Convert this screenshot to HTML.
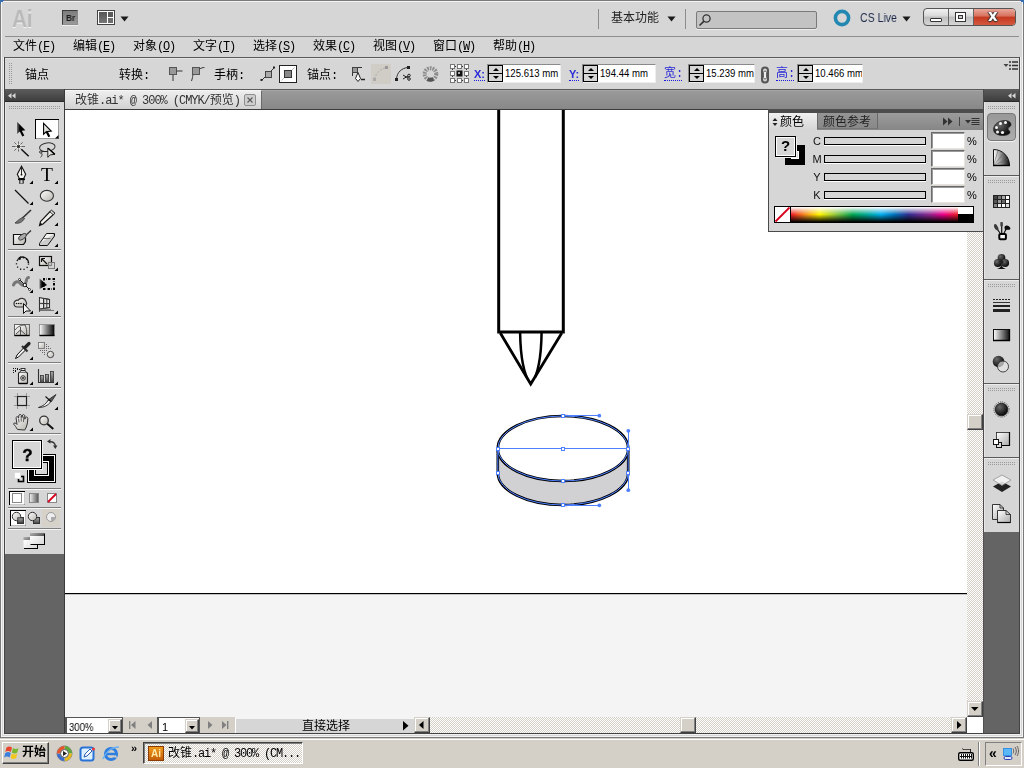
<!DOCTYPE html>
<html lang="zh-CN">
<head>
<meta charset="utf-8">
<title>改锥.ai* @ 300% (CMYK/预览)</title>
<style>
*{box-sizing:border-box;margin:0;padding:0}
html,body{width:1024px;height:768px;overflow:hidden;background:#d6d6d6}
body{position:relative;font-family:"Liberation Sans","WenQuanYi Zen Hei","Noto Sans CJK SC",sans-serif;font-size:12px;color:#000;line-height:1}
.a{position:absolute}
.t{position:absolute;white-space:nowrap;line-height:14px;height:14px;will-change:transform}
svg{position:absolute;overflow:visible}
.s,.m{font-family:"Liberation Mono","Noto Sans CJK SC",monospace;font-size:12px}
.l{letter-spacing:-1.2px;font-family:"Liberation Mono",monospace}
.m{top:40px}
.lb{top:67px;color:#2a2ad8;font-size:11px;font-weight:bold;border-bottom:1px dotted #1a1ae0;height:14px;line-height:15px}
.lb.s{font-size:12px;font-weight:normal;line-height:13px;height:13px;top:68px !important}
.inp{top:64px;height:19px;background:#fff;border:1px solid #8a8a8a;border-right-color:#eee;border-bottom-color:#eee;overflow:hidden;white-space:nowrap;font-size:11px;line-height:17px;color:#000}
.inp span{position:absolute;left:17px;top:0;transform:scaleX(0.87);transform-origin:0 0}
.spn{position:absolute;left:0;top:0;width:15px;height:17px;border:1px solid #000;background:#d6d6d6}
.spn:before{content:"";position:absolute;left:0;top:7px;width:13px;height:1px;background:#000}
.spn i{position:absolute;left:3.500px;width:0;height:0;border-left:3px solid transparent;border-right:3px solid transparent}
.spn i.u{top:2px;border-bottom:3px solid #000}
.spn i.d{top:10px;border-top:3px solid #000}
.chk{background-color:#eae8e3;background-image:conic-gradient(#fff 25%,#d4d0c8 0 50%,#fff 0 75%,#d4d0c8 0);background-size:2px 2px}
.btn{background:#d4d0c8;border:1px solid #d4d0c8;border-right-color:#404040;border-bottom-color:#404040;box-shadow:inset -1px -1px 0 #808080,inset 1px 1px 0 #fff}
.btn2{background:#d4d0c8;border:1px solid #fff;border-right-color:#404040;border-bottom-color:#404040;box-shadow:inset -1px -1px 0 #808080}
.grip{background-image:radial-gradient(circle at 0.5px 0.5px,#9a9a9a 0.55px,transparent 0.7px);background-size:2px 2px}
</style>
</head>
<body>
<!-- window frame -->
<div class="a" id="frame" style="left:0;top:0;width:1024px;height:738px;background:#d6d6d6"></div>
<!-- SECTION:TITLEBAR -->
<div class="a" style="left:0;top:0;width:1024px;height:738px;border:1px solid #7a7a7a;box-shadow:inset 0 0 0 1px #f4f4f4"></div>
<svg style="left:0;top:0" width="4" height="4"><path d="M0 0H4V1H3V2H1V3H1V4H0z" fill="#3a6eb0"/></svg>
<svg style="left:1020px;top:0" width="4" height="4"><path d="M4 0H0V1H1V2H3V3H3V4H4z" fill="#3a6eb0"/></svg>
<div class="a" style="left:3px;top:57px;width:1px;height:678px;background:#f0f0f0"></div>
<div class="a" style="left:1020px;top:57px;width:1px;height:678px;background:#f0f0f0"></div>
<div class="t" id="ailogo" style="left:12px;top:6px;height:26px;line-height:26px;font-size:23px;font-weight:bold;color:#b9b9b9;text-shadow:0 1px 0 #f4f4f4;transform:scaleX(0.9);transform-origin:0 0">Ai</div>
<div class="a" style="left:62px;top:10px;width:16px;height:15px;background:linear-gradient(#7d7d7d,#9a9a9a);border:1px solid #3c3c3c;border-right-color:#8a8a8a;border-bottom-color:#8e8e8e;box-shadow:0 1px 0 #eee"></div>
<div class="t" style="left:65.500px;top:12px;font-size:9px;font-weight:bold;color:#1a1a1a;line-height:13px;height:13px;transform:scaleX(0.92);transform-origin:0 0">Br</div>
<div class="a" style="left:97px;top:10px;width:18px;height:15px;background:#fff;border:1px solid #444"></div>
<div class="a" style="left:99px;top:12px;width:8px;height:11px;background:linear-gradient(#555,#777)"></div>
<div class="a" style="left:108px;top:12px;width:5px;height:5px;background:#5a5a5a"></div>
<div class="a" style="left:108px;top:18px;width:5px;height:5px;background:#6e6e6e"></div>
<svg style="left:120px;top:16px" width="9" height="6"><path d="M0.5 0.5h8l-4 5z" fill="#1a1a1a"/></svg>
<div class="a" style="left:598px;top:9px;width:1px;height:20px;background:#8c8c8c"></div>
<div class="t" style="left:611px;top:11px;font-size:12px;color:#222;font-family:'Liberation Sans','Noto Sans CJK SC',sans-serif">基本功能</div>
<svg style="left:667px;top:16px" width="9" height="6"><path d="M0.5 0.5h8l-4 5z" fill="#1a1a1a"/></svg>
<div class="a" style="left:685px;top:9px;width:1px;height:20px;background:#8c8c8c"></div>
<div class="a" style="left:696px;top:11px;width:121px;height:18px;background:#c3c3c3;border:1px solid #7a7a7a;border-radius:2px;box-shadow:0 1px 0 #ececec"></div>
<svg style="left:698px;top:13px" width="14" height="14"><circle cx="8.5" cy="5.5" r="3.6" fill="none" stroke="#333" stroke-width="1.3"/><path d="M6 8.2L1.5 12.5" stroke="#333" stroke-width="1.6"/></svg>
<svg style="left:832px;top:8px" width="20" height="20"><circle cx="10" cy="10" r="6.6" fill="none" stroke="#2288b2" stroke-width="3.6"/></svg>
<div class="t" style="left:860px;top:11px;font-size:12px;color:#1e2a4a;transform:scaleX(0.88);transform-origin:0 0">CS Live</div>
<svg style="left:902px;top:16px" width="9" height="6"><path d="M0.5 0.5h8l-4 5z" fill="#1a1a1a"/></svg>
<!-- window buttons -->
<div class="a" style="left:923px;top:8px;width:93px;height:18px;border:1px solid #555;border-radius:4px;background:linear-gradient(#f2f2f2 0%,#d8d8d8 45%,#bdbdbd 50%,#d6d6d6 100%);overflow:hidden">
 <div class="a" style="left:24px;top:0;width:1px;height:16px;background:#666"></div>
 <div class="a" style="left:49px;top:0;width:1px;height:16px;background:#666"></div>
 <div class="a" style="left:50px;top:0;width:42px;height:16px;background:linear-gradient(#e9a79b 0%,#d8705d 45%,#c4391f 50%,#d4583f 100%)"></div>
 <div class="a" style="left:6px;top:9px;width:12px;height:4px;background:#fff;border:1px solid #333;border-radius:1px"></div>
 <div class="a" style="left:31px;top:3px;width:11px;height:10px;background:#fff;border:1px solid #333"></div>
 <div class="a" style="left:34px;top:6px;width:5px;height:4px;background:#ccc;border:1px solid #333"></div>
 <div class="t" style="left:64px;top:-2px;font-size:15px;font-weight:bold;color:#fff;line-height:18px;height:18px;text-shadow:0 0 1px #333,0 1px 1px #333,1px 0 1px #333,-1px 0 1px #333;font-family:'DejaVu Sans','Liberation Sans',sans-serif">x</div>
</div>
<!-- SECTION:MENUBAR -->
<div class="a" style="left:5px;top:36px;width:1014px;height:1px;background:#8e8e8e"></div>
<div class="t m" style="left:13px">文件<span class="l">(<u>F</u>)</span></div>
<div class="t m" style="left:73px">编辑<span class="l">(<u>E</u>)</span></div>
<div class="t m" style="left:133px">对象<span class="l">(<u>O</u>)</span></div>
<div class="t m" style="left:193px">文字<span class="l">(<u>T</u>)</span></div>
<div class="t m" style="left:253px">选择<span class="l">(<u>S</u>)</span></div>
<div class="t m" style="left:313px">效果<span class="l">(<u>C</u>)</span></div>
<div class="t m" style="left:373px">视图<span class="l">(<u>V</u>)</span></div>
<div class="t m" style="left:433px">窗口<span class="l">(<u>W</u>)</span></div>
<div class="t m" style="left:493px">帮助<span class="l">(<u>H</u>)</span></div>
<!-- SECTION:CONTROLBAR -->
<div class="a" style="left:4px;top:57px;width:1016px;height:32px;border:1px solid #5a5a5a;border-bottom:none;background:#d6d6d6"></div>
<div class="a" style="left:5px;top:58px;width:1014px;height:1px;background:#e4e4e4"></div>
<div class="a" style="left:9px;top:63px;width:3px;height:21px;background-image:radial-gradient(circle at 0.5px 0.5px,#999 0.6px,transparent 0.7px);background-size:2px 2px"></div>
<div class="t s" style="left:25px;top:69px">锚点</div>
<div class="t s" style="left:119px;top:69px">转换<span class="l">:</span></div>
<svg style="left:167px;top:66px" width="16" height="16"><rect x="2.5" y="1.5" width="7" height="7" fill="#999" stroke="#555"/><path d="M6 9v6M9.5 5h6" stroke="#333" fill="none"/></svg>
<svg style="left:189px;top:66px" width="16" height="16"><rect x="3.5" y="1.5" width="7" height="7" fill="#999" stroke="#555"/><path d="M2.5 15c1-3 1-4 1.5-6M10.5 3c2-1 3-1.5 5-1.500" stroke="#333" fill="none"/></svg>
<div class="t s" style="left:214px;top:69px">手柄<span class="l">:</span></div>
<svg style="left:260px;top:66px" width="16" height="16"><path d="M1.5 14.500L14.500 1.500" stroke="#333" fill="none"/><rect x="5.500" y="5.500" width="6" height="6" fill="#aaa" stroke="#444"/><rect x="0.500" y="13" width="2" height="2" fill="#222"/><rect x="13" y="0.500" width="2" height="2" fill="#222"/></svg>
<div class="a" style="left:279px;top:65px;width:18px;height:18px;background:#fff;border:1px solid #222"></div>
<svg style="left:280px;top:66px" width="16" height="16"><path d="M1.5 14.500L14.500 1.500" stroke="#bbb" fill="none"/><rect x="4.500" y="4.500" width="7" height="7" fill="#888" stroke="#333"/></svg>
<div class="t s" style="left:307px;top:69px">锚点<span class="l">:</span></div>
<svg style="left:350px;top:65px" width="17" height="18"><path d="M2.500 11V2.500h9.500" stroke="#333" fill="none"/><rect x="2.500" y="2.500" width="5" height="5" fill="#999" stroke="#444"/><path d="M5.500 13.500l2.500-6 2.500 6-2.500 3z" fill="#fff" stroke="#222"/><path d="M11 14.500h4" stroke="#222" stroke-width="1.500"/></svg>
<div class="a" style="left:371px;top:64px;width:20px;height:20px;background:#d0cdc6"></div>
<svg style="left:372px;top:65px" width="18" height="18"><path d="M2.500 14C4 8 8 4 14.500 2.500" stroke="#aaa" fill="none" stroke-dasharray="2 1.500"/><rect x="1" y="13" width="3" height="3" fill="#aaa"/><rect x="13" y="1" width="3" height="3" fill="#999"/></svg>
<svg style="left:394px;top:65px" width="18" height="18"><path d="M2.500 14C3 7 8 3 14 2.500" stroke="#333" fill="none"/><rect x="1" y="13" width="3" height="3" fill="#222"/><rect x="13" y="1" width="3" height="3" fill="#222"/><path d="M9 10l5 3M9 14l5-3" stroke="#222" fill="none"/><circle cx="15" cy="10.500" r="1.300" fill="none" stroke="#222"/><circle cx="15" cy="14" r="1.300" fill="none" stroke="#222"/></svg>
<svg style="left:422px;top:65px" width="18" height="18"><circle cx="8.500" cy="9" r="5.800" fill="none" stroke="#8a8a8a" stroke-width="4" stroke-dasharray="1.600 1"/><circle cx="8.500" cy="9" r="5.800" fill="none" stroke="#555" stroke-width="4" stroke-dasharray="6 40" stroke-dashoffset="-6"/></svg>
<svg style="left:450px;top:64px" width="20" height="20"><g fill="#fff" stroke="#777"><rect x="0.500" y="0.500" width="4" height="4"/><rect x="7.500" y="0.500" width="4" height="4"/><rect x="14.500" y="0.500" width="4" height="4"/><rect x="0.500" y="7.500" width="4" height="4"/><rect x="14.500" y="7.500" width="4" height="4"/><rect x="0.500" y="14.500" width="4" height="4"/><rect x="7.500" y="14.500" width="4" height="4"/><rect x="14.500" y="14.500" width="4" height="4"/></g><path d="M5 2.500h2M12 2.500h2M5 16.500h2M12 16.500h2M2.500 5v2M2.500 12v2M16.500 5v2M16.500 12v2" stroke="#333" stroke-dasharray="1 1"/><rect x="6.500" y="6.500" width="6" height="6" fill="#111"/><rect x="8" y="8" width="2" height="2" fill="#aaa"/></svg>
<div class="t lb" style="left:474px">X:</div>
<div class="a inp" style="left:487px;width:74px"><div class="spn"><i class="u"></i><i class="d"></i></div><span>125.613 mm</span></div>
<div class="t lb" style="left:569px">Y:</div>
<div class="a inp" style="left:582px;width:74px"><div class="spn"><i class="u"></i><i class="d"></i></div><span>194.44 mm</span></div>
<div class="t lb s" style="left:664px;top:69px">宽<span class="l">:</span></div>
<div class="a inp" style="left:688px;width:67px"><div class="spn"><i class="u"></i><i class="d"></i></div><span>15.239 mm</span></div>
<svg style="left:760px;top:66px" width="10" height="18"><rect x="2" y="1.500" width="6" height="15" rx="3" fill="none" stroke="#555" stroke-width="2"/><rect x="3.500" y="5" width="3" height="8" rx="1.500" fill="#eee" stroke="#666"/></svg>
<div class="t lb s" style="left:776px;top:69px">高<span class="l">:</span></div>
<div class="a inp" style="left:797px;width:66px"><div class="spn"><i class="u"></i><i class="d"></i></div><span>10.466 mm</span></div>
<svg style="left:1003px;top:61px" width="16" height="10"><path d="M0.500 3h5l-2.500 3z" fill="#444"/><path d="M6 1h2M6 4.500h2M6 8h2M9 1h6M9 4.500h6M9 8h6" stroke="#333" stroke-width="1.500"/></svg>
<!-- SECTION:WORKSPACE -->
<div class="a" style="left:4px;top:89px;width:1016px;height:645px;background:#646464"></div>
<div class="a" style="left:4px;top:57px;width:1px;height:677px;background:#444"></div>
<div class="a" style="left:1019px;top:57px;width:1px;height:677px;background:#444"></div>
<!-- tab bar -->
<div class="a" style="left:65px;top:89px;width:918px;height:20px;background:linear-gradient(#5a5a5a 0,#5a5a5a 1px,#a6a6a6 1px,#a6a6a6 2px,#9a9a9a 2px,#888 100%)"></div>
<div class="a" style="left:65px;top:109px;width:919px;height:1px;background:#3c3c3c"></div>
<div class="a" style="left:65px;top:90px;width:197px;height:19px;background:linear-gradient(#eeeeee,#d2d2d2);border-right:1px solid #6a6a6a;border-top:1px solid #f6f6f6"></div>
<div class="t s" style="left:75px;top:94px;color:#333">改锥<span class="l" style="letter-spacing:-1.050px">.ai* @ 300% (CMYK/</span>预览<span class="l">)</span></div>
<div class="a" style="left:244px;top:94px;width:12px;height:12px;border:1px solid #8e8e8e;border-radius:2px;background:#cfcfcf"></div>
<svg style="left:244px;top:94px" width="12" height="12"><path d="M3.500 3.500l5 5M8.500 3.500l-5 5" stroke="#5a5a5a" stroke-width="1.100"/></svg>
<!-- SECTION:TOOLBAR -->
<div class="a" style="left:5px;top:89px;width:59px;height:12px;background:linear-gradient(#5c5c5c,#3e3e3e)"></div>
<div class="a" style="left:5px;top:101px;width:60px;height:1px;background:#2a2a2a"></div>
<svg style="left:8px;top:93px" width="8" height="6"><path d="M3.500 0v5.500L0 2.750zM7.500 0v5.500L4 2.750z" fill="#d8d8d8"/></svg>
<div class="a" style="left:5px;top:102px;width:59px;height:452px;background:#d6d6d6;border-left:1px solid #e6e6e6"></div>
<div class="a" style="left:64px;top:89px;width:1px;height:465px;background:#4a4a4a"></div>
<div class="a grip" style="left:9px;top:106px;width:52px;height:4px"></div>
<svg id="tools" style="left:0;top:100px;will-change:transform" width="66" height="456" viewBox="0 100 66 456">
<defs>
<linearGradient id="gw" x1="0" y1="0" x2="1" y2="1"><stop offset="0" stop-color="#fff"/><stop offset="1" stop-color="#b8b5ae"/></linearGradient>
<linearGradient id="gh" x1="0" y1="0" x2="1" y2="0"><stop offset="0" stop-color="#fff"/><stop offset="1" stop-color="#000"/></linearGradient>
<linearGradient id="gt" x1="0" y1="0" x2="1" y2="0.3"><stop offset="0" stop-color="#b4b4b4"/><stop offset="1" stop-color="#5a5a5a"/></linearGradient>
<linearGradient id="gw2" x1="0" y1="0" x2="1" y2="0.6"><stop offset="0" stop-color="#fff"/><stop offset="1" stop-color="#dcdcdc"/></linearGradient>
<linearGradient id="gh2" x1="0" y1="0" x2="1" y2="0"><stop offset="0" stop-color="#f4f4f4"/><stop offset="1" stop-color="#555"/></linearGradient>
<linearGradient id="gc" x1="0" y1="0" x2="1" y2="0"><stop offset="0" stop-color="#222"/><stop offset="0.450" stop-color="#e8e8e8"/><stop offset="1" stop-color="#222"/></linearGradient>
<linearGradient id="gd" x1="0" y1="0" x2="0" y2="1"><stop offset="0" stop-color="#aaa"/><stop offset="1" stop-color="#444"/></linearGradient>
<linearGradient id="ga" x1="0" y1="0" x2="1" y2="0"><stop offset="0" stop-color="#777"/><stop offset="0.350" stop-color="#000"/></linearGradient>
</defs>
<!-- selection -->
<path d="M17 121.800V134L19.800 131.500L22.300 136.500L24.300 135.500L21.800 130.800L25.300 130.300z" fill="url(#ga)"/>
<!-- direct selection (active) -->
<rect x="35.500" y="119.500" width="23" height="19" fill="#fff" stroke="#000"/>
<path d="M36 138.500H58.500V120" fill="none" stroke="#9a9a9a"/>
<path d="M43.600 123.300V134.200L46.200 131.800L51.300 131z" fill="url(#gw)" stroke="#000" stroke-width="1.100" stroke-linejoin="miter"/>
<path d="M46.600 131.500L49.300 136.800" stroke="#000" stroke-width="2.200"/>
<path d="M58.5 135.0V138.5H55.0z" fill="#000"/>
<!-- magic wand -->
<path d="M18.500 141.500v10M12 146.500h13M14.300 142.300l8.400 8.400M22.700 142.300l-8.400 8.400" stroke="#4a4a4a" stroke-width="0.800"/>
<circle cx="18.500" cy="146.500" r="2.800" fill="#fbfaf6" fill-opacity="0.850"/>
<path d="M17 145l3 3M20 145l-3 3M18.500 144.500v4M16.500 146.500h4" stroke="#222" stroke-width="0.800"/>
<path d="M21.300 149.300L28.700 156.300" stroke="#111" stroke-width="1.500"/>
<!-- lasso -->
<ellipse cx="47.300" cy="147.200" rx="7.800" ry="4.300" transform="rotate(-8 47.300 147.200)" fill="none" stroke="#333" stroke-width="1"/>
<circle cx="40.800" cy="152" r="1.200" fill="none" stroke="#222" stroke-width="0.900"/>
<path d="M41.600 153.300c0.900 1.500 0.300 3-1.100 4" fill="none" stroke="#222" stroke-width="0.900"/>
<path d="M42 151.500H47.500" stroke="#222" stroke-width="0.900"/>
<path d="M47.800 148V157.300L50.300 154.900L55 154.300z" fill="url(#gw)" stroke="#111" stroke-width="0.900"/>
<path d="M48 148.300L54.800 154.200" stroke="#000" stroke-width="1.500"/>
<path d="M8 161.500H61" stroke="#7e7e7e"/><path d="M8 162.500H61" stroke="#f6f6f6"/>
<!-- pen -->
<path d="M21.500 166.300L17.300 174.300L19.300 178.500H23.700L25.700 174.300z" fill="#f6f4f0" stroke="#111" stroke-width="1.100"/>
<path d="M21.500 167.500V174.500" stroke="#111" stroke-width="0.900"/><circle cx="21.500" cy="174.700" r="0.900" fill="#111"/>
<path d="M18 179.300H25" stroke="#000" stroke-width="1.600"/>
<rect x="19.300" y="180" width="4.400" height="3.600" fill="url(#gc)" stroke="#333" stroke-width="0.500"/>
<!-- T -->
<text x="47" y="181.300" font-family="'Liberation Serif',serif" font-size="19.500" text-anchor="middle" fill="#000">T</text>
<path d="M33 180.5V184H29.5z" fill="#000"/><path d="M58 180.5V184H54.5z" fill="#000"/>
<!-- line -->
<path d="M15 190L28.500 203.500" stroke="#111" stroke-width="1.300"/>
<!-- ellipse -->
<ellipse cx="46.900" cy="195.800" rx="6.600" ry="5.400" fill="url(#gw)" stroke="#333" stroke-width="1.100"/>
<path d="M33 201.5V205H29.5z" fill="#000"/><path d="M58 201.5V205H54.5z" fill="#000"/>
<!-- brush -->
<path d="M31 210L22 218.500" stroke="#333" stroke-width="1.600"/>
<path d="M23.500 217.500c-3 0.500-5 2.500-8.500 5.500c4 1 7.500-1 9.500-4.500z" fill="#777" stroke="#333" stroke-width="0.800"/>
<!-- pencil -->
<path d="M50 211.500L53.500 214.500L43 224L39.500 225.500L40.500 221.500z" fill="#f2f0ec" stroke="#111" stroke-width="1.100"/>
<path d="M50 211.500l1.500-1.300l3.500 3l-1.500 1.300" fill="#ddd" stroke="#111" stroke-width="1"/>
<path d="M42.500 224.300L39.500 225.500L40.300 222.500z" fill="#111"/>
<path d="M58 222.5V226H54.5z" fill="#000"/>
<!-- blob brush -->
<path d="M13.500 234.500H22L25.500 238V241.500L23.500 244.500H13.500z" fill="url(#gw)" stroke="#111" stroke-width="1.200"/>
<path d="M31 230.500L25 236" stroke="#333" stroke-width="1.300"/>
<ellipse cx="22.500" cy="236.800" rx="4.500" ry="2.200" transform="rotate(-35 22.500 236.800)" fill="#aaa" stroke="#333" stroke-width="0.900"/>
<!-- eraser -->
<path d="M46.500 233.500H54.500L47 243.500H39.500z" fill="#f6f4f0" stroke="#111" stroke-width="1"/>
<path d="M54.500 233.500V236L47.500 245.500H39.500V243.500" fill="#ccc" stroke="#111" stroke-width="1"/>
<path d="M43 238.500H50.500" stroke="#555" stroke-width="0.800"/>
<path d="M58 243.5V247H54.5z" fill="#000"/><path d="M8 249.500H61" stroke="#7e7e7e"/><path d="M8 250.500H61" stroke="#f6f6f6"/>
<!-- rotate -->
<circle cx="22.500" cy="263.500" r="6" fill="none" stroke="#111" stroke-width="1.400" stroke-dasharray="1.200 2.300"/>
<path d="M19 258.200A6 6 0 0 1 28.500 263" fill="none" stroke="#111" stroke-width="1.300"/>
<path d="M17 259.500L20.500 256V260z" fill="#111"/>
<!-- scale -->
<rect x="39.500" y="256.500" width="12" height="9" fill="url(#gw)" stroke="#111" stroke-width="1.200"/>
<path d="M41.500 258.500L47 264M41.500 258.500V262M41.500 258.500H45" stroke="#111" stroke-width="1.200" fill="none"/>
<rect x="48.500" y="262.500" width="6" height="6" fill="#d6d6d6" fill-opacity="0.600" stroke="#777" stroke-width="1"/>
<path d="M33 267.5V271H29.5z" fill="#000"/><path d="M58 267.5V271H54.5z" fill="#000"/>
<!-- width/warp -->
<path d="M13.500 285c1.500-4 5-4 7-1.500s4.500 2.500 5.500-1.500s0.500-4 2.500-4.500" fill="none" stroke="#777" stroke-width="3" stroke-linecap="round"/>
<path d="M19.500 279.500L30 290" stroke="#111" stroke-width="1"/>
<circle cx="24.800" cy="285" r="1.700" fill="#fff" stroke="#111"/><circle cx="19.500" cy="279.500" r="1" fill="#fff" stroke="#111" stroke-width="0.800"/><circle cx="29.500" cy="289.500" r="1" fill="#fff" stroke="#111" stroke-width="0.800"/>
<!-- free transform -->
<rect x="44" y="279" width="10" height="10" fill="none" stroke="#111" stroke-dasharray="1 1"/>
<g fill="#000"><rect x="43" y="278" width="2" height="2"/><rect x="48" y="278" width="2" height="2"/><rect x="53" y="278" width="2" height="2"/><rect x="53" y="283" width="2" height="2"/><rect x="53" y="288" width="2" height="2"/><rect x="48" y="288" width="2" height="2"/><rect x="43" y="288" width="2" height="2"/></g>
<path d="M39.500 278.500V289L47 285z" fill="url(#ga)"/>
<path d="M33 289.5V293H29.5z" fill="#000"/>
<!-- shape builder -->
<path d="M14 303.500a3.300 3.300 0 0 1 4-3.200a4.500 4.500 0 0 1 8 1.200c1.500 2 0 5.500-3 5.500h-5.500c-2 0-3.500-1.500-3.500-3.500z" fill="url(#gw)" stroke="#333" stroke-width="1.200"/>
<circle cx="16.500" cy="303.500" r="0.800" fill="#111"/><circle cx="18.700" cy="303.500" r="0.800" fill="#111"/><circle cx="21" cy="303.500" r="0.800" fill="#111"/>
<path d="M23.500 303.500V313.500L26 311L30.500 311z" fill="#f4f4f4" stroke="#111" stroke-width="1"/>
<!-- perspective grid -->
<path d="M39.500 297V311.500M39.500 297.500L49.500 299.500V307.500L39.500 309M44.500 298.500V308.200M39.500 303.500L49.500 303.700" fill="none" stroke="#333" stroke-width="1.100"/>
<path d="M40 298L49 300V307.500L40 308.800z" fill="#eee" fill-opacity="0.700"/>
<path d="M39.500 297V311.500M39.500 297.500L49.500 299.500V307.500L39.500 309M43.500 298.300V308.400M46.800 299V308M39.500 303.300L49.500 303.700" fill="none" stroke="#333" stroke-width="1"/>
<path d="M39.500 310.500H54M41 309.300H51" stroke="#666" stroke-width="0.900"/>
<path d="M33 310.5V314H29.5z" fill="#000"/><path d="M58 310.5V314H54.5z" fill="#000"/><path d="M8 316.500H61" stroke="#7e7e7e"/><path d="M8 317.500H61" stroke="#f6f6f6"/>
<!-- mesh -->
<rect x="14.500" y="324.500" width="15" height="11" fill="url(#gw)" stroke="#666"/>
<path d="M14.500 335.500H29.500" stroke="#000" stroke-width="1.400"/>
<path d="M15 330c3-4 7-5 10-5M20.500 327V335M20.500 330l-4.500 4M20.500 330l5 4.500M25 325c1.500 3 2 6 1.500 10" fill="none" stroke="#444" stroke-width="0.900"/>
<!-- gradient -->
<rect x="39.500" y="324.500" width="15" height="11" fill="url(#gh)" stroke="#888" stroke-width="0.800"/>
<path d="M39.500 335.500H54.500" stroke="#000" stroke-width="1.400"/>
<!-- eyedropper -->
<path d="M15.500 358.500L17 355L24 347.500L26 349.500L18.500 357z" fill="#f4f4f4" stroke="#111" stroke-width="1"/>
<path d="M22 346L27.500 351.500" stroke="#333" stroke-width="2.200"/>
<path d="M25 347.500L29 343.500" stroke="#222" stroke-width="3.200" stroke-linecap="round"/>
<!-- blend -->
<rect x="38.500" y="342.500" width="6" height="6" fill="url(#gw)" stroke="#777" stroke-width="0.900"/>
<circle cx="50.500" cy="354.500" r="3.200" fill="url(#gw)" stroke="#444" stroke-width="1"/>
<g fill="#666"><rect x="46" y="344" width="1" height="1"/><rect x="48" y="346" width="1" height="1"/><rect x="46" y="346" width="1" height="1"/><rect x="50" y="348" width="1" height="1"/><rect x="46" y="348" width="1" height="1"/><rect x="48" y="348" width="1" height="1"/><rect x="40" y="350" width="1" height="1"/><rect x="42" y="350" width="1" height="1"/><rect x="44" y="350" width="1" height="1"/><rect x="46" y="350" width="1" height="1"/><rect x="42" y="352" width="1" height="1"/><rect x="44" y="352" width="1" height="1"/><rect x="44" y="354" width="1" height="1"/></g>
<path d="M33 356.5V360H29.5z" fill="#000"/><path d="M8 362.500H61" stroke="#7e7e7e"/><path d="M8 363.500H61" stroke="#f6f6f6"/>
<!-- symbol sprayer -->
<rect x="18.500" y="372.500" width="9" height="11" rx="1" fill="url(#gw)" stroke="#222" stroke-width="1.100"/>
<path d="M18.500 383.500H27.500" stroke="#000" stroke-width="1.400"/>
<rect x="21" y="368.500" width="4" height="2" fill="#eee" stroke="#222" stroke-width="0.900"/>
<path d="M19.500 372.500L21 370.500H25L26.500 372.500" fill="#ccc" stroke="#222" stroke-width="0.900"/>
<circle cx="23" cy="378" r="2.300" fill="#ddd" stroke="#333" stroke-width="1"/><circle cx="23" cy="378" r="0.900" fill="#111"/>
<g fill="#111"><rect x="13" y="368" width="1" height="1"/><rect x="15" y="368" width="1" height="1"/><rect x="17" y="368" width="1" height="1"/><rect x="13" y="370" width="1" height="1"/><rect x="15" y="370" width="1" height="1"/><rect x="17" y="369" width="1" height="1"/><rect x="19" y="369" width="1" height="1"/><rect x="13" y="372" width="1" height="1"/><rect x="15" y="371" width="1" height="1"/></g>
<!-- graph -->
<path d="M38.500 369V382.500H54" fill="none" stroke="#333" stroke-width="1.100"/>
<rect x="40.500" y="375.500" width="3" height="7" fill="url(#gd)" stroke="#333" stroke-width="0.800"/>
<rect x="45.500" y="374.500" width="3" height="8" fill="url(#gd)" stroke="#333" stroke-width="0.800"/>
<rect x="50.500" y="371.500" width="3" height="11" fill="url(#gd)" stroke="#333" stroke-width="0.800"/>
<path d="M33 381.5V385H29.5z" fill="#000"/><path d="M58 381.5V385H54.5z" fill="#000"/><path d="M8 387.500H61" stroke="#7e7e7e"/><path d="M8 388.500H61" stroke="#f6f6f6"/>
<!-- artboard -->
<rect x="17.500" y="396.500" width="9" height="9" fill="none" stroke="#222" stroke-width="1.200"/>
<path d="M17.500 393v3M26.500 393v3M17.500 406v3M26.500 406v3M14 396.500h3M14 405.500h3M27 396.500h3M27 405.500h3" stroke="#999" stroke-width="1"/>
<!-- slice -->
<path d="M38.500 407.500c5-1.500 8-4 10-8l2.500 2c-3 4-7 6-12.500 6z" fill="#f0f0f0" stroke="#222" stroke-width="0.900"/>
<path d="M48 400L56 394.500l-4.500 7z" fill="#555" stroke="#222" stroke-width="0.800"/>
<path d="M45.500 396.500L51 401.500" stroke="#111" stroke-width="1.100"/>
<path d="M58 406.5V410H54.5z" fill="#000"/>
<!-- hand -->
<path d="M17.500 429.500c-1.500-2.500-2.500-4-4-5.500c0.500-1.500 2-1.500 3.500 0.500l-1-7c1-1.300 2-1 2.500 0.500l0.500-3c1-1 2-0.500 2.500 0.500l0.500 2l0.500-2.500c1-0.800 2-0.300 2.300 0.700v3.500l1-2c1-0.500 1.800 0 2 1c0 3.500-0.500 8-3 11.800z" fill="url(#gw)" stroke="#333" stroke-width="1"/>
<path d="M18.500 418.500l0.500 4M21 415.500l0.300 6M23.700 416.500l-0.200 5.500" stroke="#444" stroke-width="0.800" fill="none"/>
<path d="M33 427.5V431H29.5z" fill="#000"/>
<!-- zoom -->
<circle cx="44" cy="420.500" r="4.300" fill="url(#gw)" stroke="#333" stroke-width="1.300"/>
<path d="M47.300 423.700L53.300 429" stroke="#111" stroke-width="2"/>
<path d="M8 433.500H61" stroke="#7e7e7e"/><path d="M8 434.500H61" stroke="#f6f6f6"/>
<!-- fill / stroke -->
<rect x="27" y="454" width="29" height="29" fill="#000"/>
<rect x="28.500" y="455.500" width="26" height="26" fill="none" stroke="#fff"/>
<rect x="34.500" y="461.500" width="14" height="14" fill="#d6d6d6" stroke="#fff"/>
<rect x="35.500" y="462.500" width="12" height="12" fill="none" stroke="#000"/>
<rect x="12" y="440" width="31" height="30" fill="#f4f4f4"/>
<rect x="12.500" y="440.500" width="29" height="28" fill="#d6d6d6" stroke="#000"/>
<rect x="13.500" y="441.500" width="27" height="26" fill="none" stroke="#fff"/>
<text x="27.500" y="460.500" font-family="'Liberation Sans',sans-serif" font-weight="bold" font-size="17" text-anchor="middle" fill="#000" stroke="#000" stroke-width="0.400">?</text>
<!-- swap -->
<path d="M49.500 442c3-1 6 1 6 5" fill="none" stroke="#333" stroke-width="1.300"/>
<path d="M47 441.500l3.500-2.500v4.500zM53 445.500h4.500l-2.200 3.500z" fill="#333"/>
<!-- default -->
<rect x="18.500" y="476.500" width="5" height="5" fill="#d6d6d6" stroke="#000" stroke-width="1.600"/>
<rect x="14.500" y="472.500" width="6" height="6" fill="#fff" stroke="#ddd" stroke-width="1"/>
<path d="M8 488.500H61" stroke="#7e7e7e"/><path d="M8 489.500H61" stroke="#f6f6f6"/>
<!-- color / gradient / none -->
<rect x="9.500" y="491.500" width="15" height="13" fill="#fff" stroke="#000"/>
<path d="M10 504.500H24.500V492" fill="none" stroke="#ccc"/>
<rect x="12.500" y="493.500" width="9" height="9" fill="#fff" stroke="#888"/>
<rect x="29.500" y="493.500" width="9" height="9" fill="url(#gh2)" stroke="#888"/>
<rect x="47.500" y="493.500" width="9" height="9" fill="#fff" stroke="#888"/>
<path d="M48 502L56 494" stroke="#d8001c" stroke-width="1.800"/>
<path d="M8 507.500H61" stroke="#7e7e7e"/><path d="M8 508.500H61" stroke="#f6f6f6"/>
<!-- draw modes -->
<rect x="42" y="509" width="18" height="18" fill="#d6d2ca"/>
<rect x="10.500" y="510.500" width="15" height="15" fill="#fff" stroke="#000"/>
<path d="M11 525.500H25.500V511" fill="none" stroke="#bbb"/>
<rect x="17.500" y="517.500" width="6" height="6" fill="url(#gd)" stroke="#333"/>
<circle cx="16.500" cy="516.500" r="4.200" fill="url(#gw)" stroke="#333" stroke-width="1"/>
<rect x="17.800" y="517.800" width="5.400" height="5.400" fill="url(#gd)" stroke="#333" stroke-width="0.900"/>
<rect x="33.500" y="517.500" width="6" height="6" fill="url(#gd)" stroke="#333"/>
<circle cx="32.500" cy="516.500" r="4.200" fill="url(#gw)" stroke="#333" stroke-width="1"/>
<circle cx="51" cy="517" r="4.500" fill="#eee" stroke="#999" stroke-width="1"/>
<path d="M51 517h4.500a4.500 4.500 0 0 1-4.500 4.500z" fill="#aaa"/>
<path d="M8 528.500H61" stroke="#7e7e7e"/><path d="M8 529.500H61" stroke="#f6f6f6"/>
<!-- screen mode -->
<rect x="23.500" y="537" width="14" height="3" fill="url(#gt)"/>
<rect x="23.500" y="540" width="14" height="8" fill="url(#gw2)"/>
<path d="M24 548.500H38M37.500 544V549" stroke="#000" fill="none"/>
<rect x="30" y="533" width="15" height="3" fill="url(#gt)"/>
<rect x="30" y="536" width="14.500" height="8.500" fill="url(#gw2)"/>
<path d="M30.500 544.500H45M44.500 534V545" stroke="#000" fill="none"/>
</svg>
<!-- SECTION:CANVAS -->
<div class="a" style="left:65px;top:110px;width:902px;height:484px;background:#fff"></div>
<div class="a" style="left:65px;top:594px;width:902px;height:123px;background:#f4f4f4"></div>
<div class="a" style="left:65px;top:593px;width:902px;height:1px;background:#000"></div>
<div class="a" style="left:65px;top:594px;width:902px;height:1px;background:#c2c2c2"></div>
<div class="a" style="left:64px;top:89px;width:1px;height:644px;background:#3a3a3a"></div>
<div class="a" style="left:983px;top:532px;width:1px;height:201px;background:#505050"></div>
<!-- vertical scrollbar -->
<div class="a chk" style="left:967px;top:110px;width:16px;height:607px"></div>
<div class="a btn" style="left:967px;top:414px;width:16px;height:16px"></div>
<div class="a btn" style="left:967px;top:701px;width:16px;height:16px"></div>
<svg style="left:971px;top:707px" width="8" height="5"><path d="M0 0h7.500l-3.750 4z" fill="#000"/></svg>
<svg id="art" style="left:65px;top:110px;overflow:hidden" width="902" height="484" viewBox="65 110 902 484">
<path d="M498.700 100V332H563.300V100" fill="none" stroke="#000" stroke-width="3"/>
<path d="M500.300 333L530.700 384L561.800 333" fill="none" stroke="#000" stroke-width="2.800" stroke-linejoin="miter"/>
<path d="M520.100 332C520.300 350 521.500 364 526.500 377" fill="none" stroke="#000" stroke-width="2.500"/>
<path d="M541.600 332C541.400 350 540.300 364 535.300 377" fill="none" stroke="#000" stroke-width="2.500"/>
<path d="M497.800 448.700V472.700A65.200 32.300 0 0 0 628.200 472.700V448.700z" fill="#d1d1d3" stroke="#000" stroke-width="2.600"/>
<ellipse cx="563" cy="448.500" rx="65.200" ry="32.500" fill="#fff" stroke="#000" stroke-width="2.600"/>
<g fill="none" stroke="#4f80ff" stroke-width="1">
<ellipse cx="563" cy="448.500" rx="65.200" ry="32.500"/>
<path d="M497.800 448.500V472.700A65.200 32.300 0 0 0 628.200 472.700V448.500"/>
<path d="M497.800 448.500H628.200M563 415.500H599M563 505.500H599M628.500 431V448M628.500 473V490"/>
</g>
<g fill="#4f80ff"><circle cx="599.300" cy="415.700" r="1.900"/><circle cx="599.300" cy="505.300" r="1.900"/><circle cx="628.300" cy="430.800" r="1.900"/><circle cx="628.300" cy="490.200" r="1.900"/></g>
<g fill="#fff" stroke="#4f80ff" stroke-width="1"><rect x="496.500" y="447.500" width="3" height="3"/><rect x="561.500" y="414.500" width="3" height="3"/><rect x="626.500" y="447.500" width="3" height="3"/><rect x="561.500" y="479.500" width="3" height="3"/><rect x="496.500" y="471.500" width="3" height="3"/><rect x="626.500" y="471.500" width="3" height="3"/><rect x="561.500" y="503.500" width="3" height="3"/><rect x="561.500" y="447.500" width="3" height="3"/></g>
</svg>
<!-- SECTION:COLORPANEL -->
<div class="a" style="left:768px;top:109px;width:216px;height:123px;background:#d6d6d6;border:1px solid #4a4a4a;border-top:none"></div>
<div class="a" style="left:768px;top:109px;width:216px;height:4px;background:#4c4c4c"></div>
<div class="a" style="left:769px;top:113px;width:214px;height:17px;background:linear-gradient(#9c9c9c,#868686)"></div>
<div class="a" style="left:769px;top:113px;width:48px;height:17px;background:linear-gradient(#f0f0f0,#d6d6d6)"></div>
<div class="a" style="left:817px;top:113px;width:61px;height:16px;background:linear-gradient(#959595,#888);border-left:1px solid #6a6a6a;border-right:1px solid #6a6a6a;border-bottom:1px solid #777"></div>
<svg style="left:772px;top:117px" width="6" height="10"><path d="M0.500 4L3 1L5.500 4zM0.500 6L3 9L5.500 6z" fill="#222"/></svg>
<div class="t s" style="left:780px;top:116px">颜色</div>
<div class="t s" style="left:823px;top:116px;color:#222">颜色参考</div>
<svg style="left:943px;top:117px" width="40" height="10"><path d="M0 0.500v8l4.500-4zM5 0.500v8l4.500-4z" fill="#333"/><path d="M16.500 0v9" stroke="#444"/><path d="M22 3h6l-3 3.500z" fill="#333"/><path d="M28.500 1.500h8M28.500 3.500h8M28.500 5.500h8M28.500 7.500h8" stroke="#333"/></svg>
<!-- fill/stroke mini -->
<div class="a" style="left:785px;top:145px;width:20px;height:20px;background:#000"></div>
<div class="a" style="left:791px;top:151px;width:8px;height:8px;background:#d6d6d6;border:1px solid #fff"></div>
<div class="a" style="left:775px;top:136px;width:21px;height:21px;background:#d6d6d6;border:1px solid #000;box-shadow:inset 0 0 0 1px #fff,1px 1px 0 #f0f0f0"></div>
<div class="t" style="left:775px;top:138px;width:21px;text-align:center;font-size:15px;font-weight:bold;line-height:16px;height:16px">?</div>
<div class="t" style="left:812px;top:134px;font-size:11px;width:10px;text-align:center;color:#111">C</div>
<div class="a" style="left:824px;top:137px;width:102px;height:8px;border:1px solid #000;background:#d6d6d6;box-shadow:0 1px 0 #fff"></div>
<div class="a" style="left:931px;top:132px;width:34px;height:17px;background:#fff;border:1px solid #6a6a6a;border-right-color:#e8e4dc;border-bottom-color:#e8e4dc;box-shadow:inset 1px 1px 0 #9a9a9a"></div>
<div class="t" style="left:967px;top:134px;font-size:11px;color:#000">%</div>
<div class="t" style="left:812px;top:152px;font-size:11px;width:10px;text-align:center;color:#111">M</div>
<div class="a" style="left:824px;top:155px;width:102px;height:8px;border:1px solid #000;background:#d6d6d6;box-shadow:0 1px 0 #fff"></div>
<div class="a" style="left:931px;top:150px;width:34px;height:17px;background:#fff;border:1px solid #6a6a6a;border-right-color:#e8e4dc;border-bottom-color:#e8e4dc;box-shadow:inset 1px 1px 0 #9a9a9a"></div>
<div class="t" style="left:967px;top:152px;font-size:11px;color:#000">%</div>
<div class="t" style="left:812px;top:170px;font-size:11px;width:10px;text-align:center;color:#111">Y</div>
<div class="a" style="left:824px;top:173px;width:102px;height:8px;border:1px solid #000;background:#d6d6d6;box-shadow:0 1px 0 #fff"></div>
<div class="a" style="left:931px;top:168px;width:34px;height:17px;background:#fff;border:1px solid #6a6a6a;border-right-color:#e8e4dc;border-bottom-color:#e8e4dc;box-shadow:inset 1px 1px 0 #9a9a9a"></div>
<div class="t" style="left:967px;top:170px;font-size:11px;color:#000">%</div>
<div class="t" style="left:812px;top:188px;font-size:11px;width:10px;text-align:center;color:#111">K</div>
<div class="a" style="left:824px;top:191px;width:102px;height:8px;border:1px solid #000;background:#d6d6d6;box-shadow:0 1px 0 #fff"></div>
<div class="a" style="left:931px;top:186px;width:34px;height:17px;background:#fff;border:1px solid #6a6a6a;border-right-color:#e8e4dc;border-bottom-color:#e8e4dc;box-shadow:inset 1px 1px 0 #9a9a9a"></div>
<div class="t" style="left:967px;top:188px;font-size:11px;color:#000">%</div>
<div class="a" style="left:774px;top:206px;width:200px;height:17px;background:#000"></div>
<div class="a" style="left:775px;top:207px;width:15px;height:15px;background:#fff"></div>
<svg style="left:775px;top:207px" width="15" height="15"><path d="M0.500 14.500L14.500 0.500" stroke="#d8001c" stroke-width="1.800"/></svg>
<div class="a" style="left:791px;top:207px;width:167px;height:15px;background:linear-gradient(to bottom,#fff 0%,rgba(255,255,255,0) 50%,rgba(0,0,0,0) 50%,#000 100%),linear-gradient(to right,#ed1c24 0%,#f7941d 9%,#fff200 17%,#8dc63f 27%,#00a651 37%,#00a99d 46%,#00aeef 54%,#0072bc 62%,#2e3192 70%,#662d91 77%,#92278f 83%,#ec008c 91%,#ed1c24 100%)"></div>
<div class="a" style="left:958px;top:207px;width:15px;height:7px;background:#fff"></div>
<!-- SECTION:DOCK -->
<div class="a" style="left:984px;top:89px;width:35px;height:12px;background:linear-gradient(#5c5c5c,#3e3e3e)"></div>
<div class="a" style="left:984px;top:101px;width:35px;height:1px;background:#2a2a2a"></div>
<svg style="left:1008px;top:93px" width="8" height="6"><path d="M3.500 0v5.500L0 2.750zM7.500 0v5.500L4 2.750z" fill="#d8d8d8"/></svg>
<div class="a" style="left:984px;top:102px;width:35px;height:430px;background:#d6d6d6;border-left:1px solid #e6e6e6"></div>
<div class="a" style="left:983px;top:89px;width:1px;height:443px;background:#4a4a4a"></div>
<div class="a grip" style="left:988px;top:106px;width:28px;height:4px"></div>
<div class="a" style="left:984px;top:175px;width:35px;height:1px;background:#5a5a5a"></div><div class="a" style="left:984px;top:176px;width:35px;height:1px;background:#ececec"></div>
<div class="a grip" style="left:988px;top:180px;width:28px;height:4px"></div>
<div class="a" style="left:984px;top:279px;width:35px;height:1px;background:#5a5a5a"></div><div class="a" style="left:984px;top:280px;width:35px;height:1px;background:#ececec"></div>
<div class="a grip" style="left:988px;top:284px;width:28px;height:4px"></div>
<div class="a" style="left:984px;top:383px;width:35px;height:1px;background:#5a5a5a"></div><div class="a" style="left:984px;top:384px;width:35px;height:1px;background:#ececec"></div>
<div class="a grip" style="left:988px;top:388px;width:28px;height:4px"></div>
<div class="a" style="left:984px;top:457px;width:35px;height:1px;background:#5a5a5a"></div><div class="a" style="left:984px;top:458px;width:35px;height:1px;background:#ececec"></div>
<div class="a grip" style="left:988px;top:462px;width:28px;height:4px"></div>
<div class="a" style="left:987px;top:113px;width:29px;height:28px;border-radius:4px;background:linear-gradient(#989898,#adadad);border:1px solid #777;box-shadow:0 1px 0 #f4f4f4"></div>
<svg id="dockicons" style="left:984px;top:100px;will-change:transform" width="36" height="432" viewBox="984 100 36 432">
<defs>
<linearGradient id="dg" x1="0" y1="0" x2="1" y2="1"><stop offset="0" stop-color="#fff"/><stop offset="1" stop-color="#aaa"/></linearGradient>
<linearGradient id="dh" x1="0" y1="0" x2="1" y2="0"><stop offset="0" stop-color="#fff"/><stop offset="1" stop-color="#111"/></linearGradient>
<radialGradient id="dr" cx="0.35" cy="0.3" r="0.8"><stop offset="0" stop-color="#6a6a6a"/><stop offset="0.8" stop-color="#111"/></radialGradient>
</defs>
<!-- palette -->
<path d="M993.500 129.500c0-5 5-9 11-9c4.500 0 6.500 2 6.500 4c0 2.500-3 2.500-3 4.500c0 1.500 2 1.500 2 3c0 2-3 3.500-7 3.500c-5 0-9.500-2-9.500-6z" fill="url(#dr)" stroke="#222" stroke-width="0.600"/>
<g fill="#f4f4f4"><circle cx="996.500" cy="127.500" r="1.500"/><circle cx="1000.500" cy="123.500" r="1.500"/><circle cx="1005.500" cy="122.500" r="1.500"/><circle cx="997.500" cy="132" r="1.500"/><circle cx="1002.500" cy="132.500" r="1.600"/></g>
<!-- color guide -->
<path d="M993.500 149.500V165.500H1009.500C1009.500 156.500 1002.500 149.500 993.500 149.500z" fill="url(#dh)" stroke="#111" stroke-width="1"/>
<path d="M993.500 165.500L998 150.500M993.500 165.500L1003.500 153.500M993.500 165.500L1008 159" stroke="#555" stroke-width="0.500"/>
<path d="M993 165.500H1010" stroke="#000" stroke-width="1.400"/>
<!-- swatches -->
<rect x="993" y="195" width="17" height="13" fill="#222"/>
<g><rect x="994" y="196" width="3" height="3" fill="#444"/><rect x="998" y="196" width="3" height="3" fill="#777"/><rect x="1002" y="196" width="3" height="3" fill="#aaa"/><rect x="1006" y="196" width="3" height="3" fill="#fff"/><rect x="994" y="200" width="3" height="3" fill="#555"/><rect x="998" y="200" width="3" height="3" fill="#999"/><rect x="1002" y="200" width="3" height="3" fill="#666"/><rect x="1006" y="200" width="3" height="3" fill="#fff"/><rect x="994" y="204" width="3" height="3" fill="#888"/><rect x="998" y="204" width="3" height="3" fill="#eee"/><rect x="1002" y="204" width="3" height="3" fill="#fff"/><rect x="1006" y="204" width="3" height="3" fill="#ddd"/></g>
<!-- brushes -->
<rect x="999.300" y="234" width="6.600" height="5.200" rx="1" fill="#f8f8f8" stroke="#000" stroke-width="2"/>
<path d="M1001.700 233V226M1004 233L1006 229.500M1000 233L997.500 229.500" stroke="#111" stroke-width="1.200"/>
<path d="M994.300 224.500c1.300-1.200 2.500 0.500 3.300 2c0.900 1.500 1.300 3 0.500 4c-1.500-0.300-3-1.200-3.700-2.800c-0.500-1.200-0.600-2.500-0.100-3.200z" fill="#3a3a3a"/>
<path d="M1004.800 226.200c1.800-1.600 4.500-0.800 5.500 1.800c0.300 1-0.300 1.800-1.500 1.800c-1.500 0-2.500 0-3.500 0.500c-0.800-1.300-1-3-0.500-4.100z" fill="#0a0a0a"/>
<rect x="1000.300" y="222" width="2.600" height="4.500" rx="0.800" fill="#444"/>
<!-- symbols -->
<circle cx="1001.500" cy="258" r="3.900" fill="url(#dr)"/><circle cx="997.800" cy="263" r="3.900" fill="url(#dr)"/><circle cx="1005.200" cy="263" r="3.900" fill="url(#dr)"/>
<circle cx="1001.500" cy="262" r="2" fill="#222"/>
<path d="M1001.500 262c0 4-1 6-4.500 7h9c-3.500-1-4.500-3-4.500-7z" fill="#111"/>
<!-- stroke -->
<path d="M993 299.500H1010" stroke="#222" stroke-width="1" stroke-dasharray="2 1"/>
<path d="M993 302.500H1010" stroke="#333" stroke-width="1"/>
<path d="M993 306H1010" stroke="#222" stroke-width="2"/>
<path d="M993 310.500H1010" stroke="#222" stroke-width="3"/>
<!-- gradient -->
<rect x="993.500" y="329.500" width="16" height="11" fill="url(#dh)" stroke="#111"/>
<path d="M993 340.500H1010M1009.500 329V341" stroke="#000" stroke-width="1.300"/>
<!-- transparency -->
<circle cx="998.500" cy="361.500" r="5.800" fill="url(#dr)"/>
<circle cx="1003" cy="366.500" r="5.500" fill="#e4e4e4" fill-opacity="0.700" stroke="#333" stroke-width="0.900"/>
<!-- appearance -->
<circle cx="1001.500" cy="409.500" r="7.600" fill="none" stroke="#444" stroke-width="0.900" stroke-dasharray="1 1"/>
<circle cx="1001.500" cy="409.500" r="6.300" fill="url(#dr)" stroke="#111" stroke-width="0.800"/>
<!-- graphic styles -->
<rect x="996.500" y="432.500" width="13" height="13" fill="url(#dg)" stroke="#222" stroke-width="0.800"/>
<path d="M996 445.500H1010M1009.500 432V446" stroke="#000" stroke-width="1.200"/>
<rect x="996.500" y="442.500" width="5" height="5" fill="#ddd" stroke="#111"/>
<rect x="993.500" y="439.500" width="5" height="5" fill="#fff" stroke="#111"/>
<!-- layers -->
<path d="M1002 481.500L1011 486.500L1002 492L993 486.500z" fill="#222"/>
<path d="M1002 475L1011 480L1002 485.500L993 480z" fill="#f4f4f4" fill-opacity="0.850" stroke="#888" stroke-width="0.700"/>
<!-- artboards -->
<path d="M992.500 504.500H1000L1003.500 508V519.500H992.500z" fill="url(#dg)" stroke="#222" stroke-width="0.900"/>
<path d="M1000 504.500V508H1003.500" fill="none" stroke="#222" stroke-width="0.800"/>
<path d="M997.500 510.500H1006L1010.500 514.500V522.500H997.500z" fill="url(#dg)" stroke="#222" stroke-width="0.900"/>
<path d="M1006 510.500V514.500H1010.500" fill="none" stroke="#222" stroke-width="0.800"/>
<path d="M997.500 522.500H1010.500" stroke="#000" stroke-width="1.200"/>
</svg>
<!-- SECTION:STATUSBAR -->
<div class="a" style="left:65px;top:717px;width:902px;height:16px;background:#d4d0c8"></div>
<div class="a" style="left:65px;top:717px;width:58px;height:16px;background:#fff;border:1px solid #555;border-bottom:none;border-left-width:2px"></div>
<div class="t" style="left:69px;top:720px;font-size:11px;transform:scaleX(0.87);transform-origin:0 0">300%</div>
<div class="a btn" style="left:108px;top:719px;width:14px;height:14px"></div>
<svg style="left:112px;top:726px" width="6" height="4"><path d="M0 0h6l-3 3.500z" fill="#000"/></svg>
<svg style="left:129px;top:721px" width="26" height="8"><path d="M0.700 0v8" stroke="#808080" stroke-width="1.400"/><path d="M6.500 0v8l-4.500-4z" fill="#808080"/><path d="M23 0v8l-4.500-4z" fill="#808080"/></svg>
<div class="a" style="left:157px;top:717px;width:43px;height:16px;background:#fff;border:1px solid #555;border-bottom:none;border-left-width:2px"></div>
<div class="t" style="left:162px;top:720px;font-size:11px">1</div>
<div class="a btn" style="left:185px;top:719px;width:14px;height:14px"></div>
<svg style="left:189px;top:726px" width="6" height="4"><path d="M0 0h6l-3 3.500z" fill="#000"/></svg>
<svg style="left:208px;top:721px" width="22" height="8"><path d="M0 0v8l4.500-4z" fill="#808080"/><path d="M14 0v8l4.500-4z" fill="#808080"/><path d="M19.700 0v8" stroke="#808080" stroke-width="1.400"/></svg>
<div class="a" style="left:235px;top:717px;width:179px;height:16px;background:#d6d6d6;border-left:1px solid #fff;border-top:2px solid #f4f4f4"></div>
<div class="t s" style="left:302px;top:720px">直接选择</div>
<svg style="left:403px;top:721px" width="6" height="10"><path d="M0 0v9.500l5.500-4.750z" fill="#000"/></svg>
<div class="a chk" style="left:430px;top:717px;width:521px;height:16px"></div>
<div class="a btn" style="left:414px;top:717px;width:16px;height:16px"></div>
<svg style="left:419px;top:721px" width="5" height="8"><path d="M4.500 0v8l-4.500-4z" fill="#000"/></svg>
<div class="a btn" style="left:951px;top:717px;width:16px;height:16px"></div>
<svg style="left:957px;top:721px" width="5" height="8"><path d="M0 0v8l4.500-4z" fill="#000"/></svg>
<div class="a btn" style="left:680px;top:717px;width:16px;height:16px"></div>
<div class="a" style="left:967px;top:717px;width:16px;height:16px;background:#fff"></div>
<!-- window bottom border -->
<div class="a" style="left:4px;top:733px;width:1016px;height:1px;background:#444"></div>
<div class="a" style="left:3px;top:734px;width:1018px;height:1px;background:#f0f0f0"></div>
<!-- SECTION:TASKBAR -->
<div class="a" style="left:0;top:738px;width:1024px;height:30px;background:#d4d0c8"></div>
<div class="a" style="left:0;top:739px;width:1024px;height:1px;background:#fff"></div>
<div class="a btn2" style="left:2px;top:742px;width:47px;height:22px"></div>
<svg style="left:5px;top:745px" width="15" height="15"><path d="M1.500 2.500c2-1.300 3.500-1.300 5.500 0l-1.200 4.500c-2-1.300-3.500-1.300-5.500 0z" fill="#e8452c"/><path d="M8 3c2 1.300 3.500 1.300 5.500 0l-1.200 4.500c-2 1.300-3.500 1.300-5.500 0z" fill="#7ab92f"/><path d="M0.300 8c2-1.300 3.500-1.300 5.500 0l-1.200 4.500c-2-1.300-3.500-1.300-5.500 0z" fill="#3a7fdb"/><path d="M6.800 8.500c2 1.300 3.500 1.300 5.500 0l-1.200 4.500c-2 1.300-3.500 1.300-5.500 0z" fill="#f3c71b"/></svg>
<div class="t s" style="left:22px;top:746px;font-weight:bold">开始</div>
<svg style="left:56px;top:745px" width="17" height="17"><circle cx="8.500" cy="8.500" r="7.500" fill="#f4f4f4" stroke="#777"/><path d="M8.500 1a7.500 7.500 0 0 1 7.500 7.500h-3.500a4 4 0 0 0-4-4z" fill="#5aa83a"/><path d="M16 8.500a7.500 7.500 0 0 1-7.500 7.500v-3.500a4 4 0 0 0 4-4z" fill="#e8b81c"/><path d="M8.500 16a7.500 7.500 0 0 1-7.500-7.500h3.500a4 4 0 0 0 4 4z" fill="#3a6fd0"/><path d="M1 8.500a7.500 7.500 0 0 1 7.500-7.500v3.500a4 4 0 0 0-4 4z" fill="#e8552c"/><circle cx="8.500" cy="8.500" r="4" fill="#fff" stroke="#555"/><path d="M7 6v5l4-2.500z" fill="#222"/></svg>
<svg style="left:79px;top:745px" width="17" height="17"><rect x="1.500" y="2.500" width="13" height="13" rx="2.500" fill="#dff0ff" stroke="#2a73d6" stroke-width="2"/><path d="M5 12l1-3 5-5 2 2-5 5z" fill="#fff" stroke="#2a5fb0"/><circle cx="14.500" cy="4" r="1.500" fill="#e33"/></svg>
<svg style="left:102px;top:744px" width="18" height="18"><circle cx="9" cy="10" r="5.500" fill="none" stroke="#2f7fe0" stroke-width="3.200"/><path d="M4 10h10" stroke="#2f7fe0" stroke-width="2.500"/><path d="M11 13l4 1-1-3z" fill="#d4d0c8"/><path d="M1 15c2-6 8-12 16-12" fill="none" stroke="#6ab0f0" stroke-width="1.500"/></svg>
<div class="t" style="left:131px;top:741px;font-size:11px;font-weight:bold">»</div>
<div class="a chk" style="left:143px;top:742px;width:160px;height:22px;border:1px solid #404040;border-right-color:#fff;border-bottom-color:#fff;box-shadow:inset 1px 1px 0 #808080"></div>
<div class="a" style="left:148px;top:746px;width:16px;height:15px;background:linear-gradient(#f09a1a,#c45e08);border:1px solid #8a3c00"></div>
<div class="t" style="left:150.500px;top:746.500px;font-size:10px;font-weight:bold;color:#ffe9a8">Ai</div>
<div class="t s" style="left:168px;top:747px">改锥<span class="l">.ai* @ 300% (CM...</span></div>
<svg style="left:957px;top:746px" width="19" height="16"><rect x="1.700" y="6.700" width="14.600" height="7.600" rx="1.500" fill="#fff" stroke="#000" stroke-width="1.400"/><g fill="#111"><rect x="4" y="8" width="1" height="2"/><rect x="6" y="8" width="1" height="2"/><rect x="8" y="8" width="1" height="2"/><rect x="10" y="8" width="1" height="2"/><rect x="12" y="8" width="1" height="2"/><rect x="14" y="8" width="1" height="2"/><rect x="3" y="10" width="12" height="1"/><rect x="4" y="11" width="1" height="1.500"/><rect x="6" y="11" width="1" height="1.500"/><rect x="8" y="11" width="1" height="1.500"/><rect x="10" y="11" width="1" height="1.500"/><rect x="12" y="11" width="1" height="1.500"/><rect x="14" y="11" width="1" height="1.500"/></g><path d="M5.500 2.500l1 1.500l1-1l1 1l1-1l1 1l1-1l1 1l1-1v3" fill="none" stroke="#111" stroke-width="0.900"/></svg>
<div class="a" style="left:978px;top:742px;width:2px;height:24px;border-left:1px solid #808080;border-right:1px solid #fff"></div>
<div class="a" style="left:985px;top:742px;width:37px;height:24px;border:1px solid #808080;border-right-color:#fff;border-bottom-color:#fff"></div>
<div class="t" style="left:989px;top:746px;font-size:14px;font-weight:bold;line-height:14px">«</div>
<svg style="left:1002px;top:745px" width="18" height="16"><rect x="1.500" y="3.500" width="8" height="7" fill="#5ab8f8" stroke="#3a8fe0"/><rect x="2" y="11.500" width="8" height="3" rx="1.500" fill="#dfe8ff" stroke="#2a3fb0"/><path d="M11 3.500c1 1.500 1 3.500 0 5M13 2c1.800 2.500 1.800 5.500 0 8M15 1c2 3 2 7 0 10" fill="none" stroke="#555" stroke-width="0.900"/></svg>
</body>
</html>
